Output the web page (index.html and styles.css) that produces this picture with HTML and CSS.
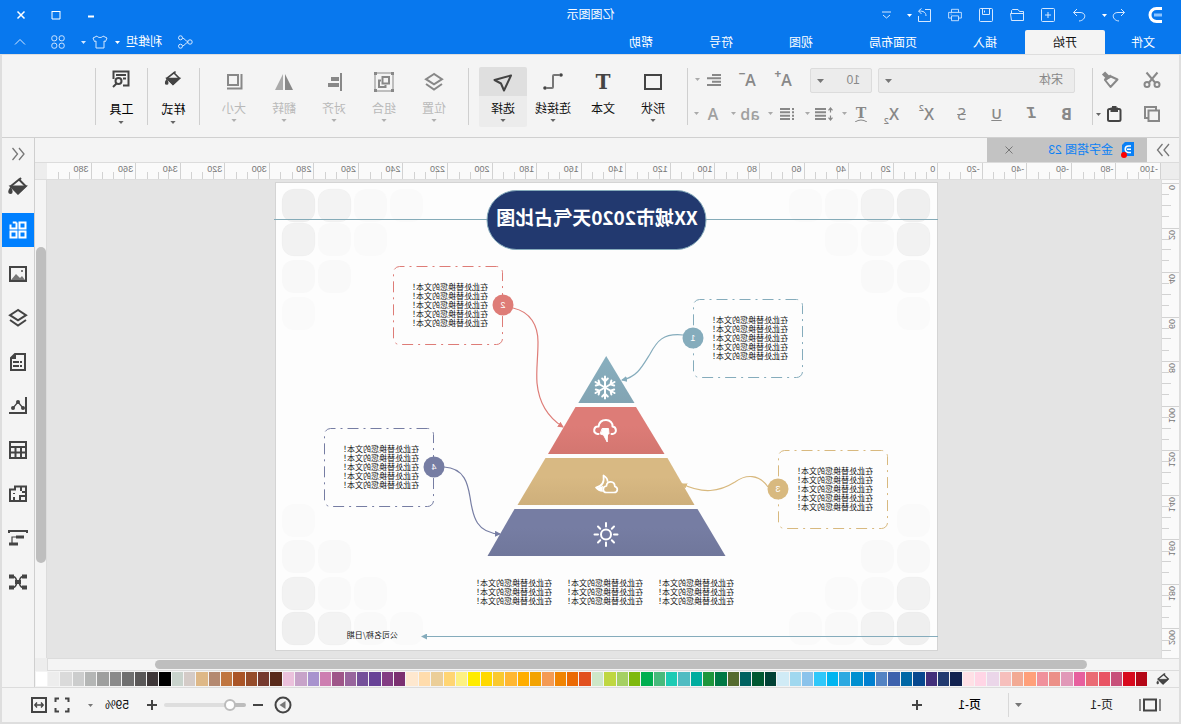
FILE: index.html
```html
<!DOCTYPE html>
<html lang="zh-CN">
<head>
<meta charset="utf-8">
<title>亿图图示</title>
<link rel="stylesheet" href="styles.css">
</head>
<body>
<svg class="defs" aria-hidden="true">
  <symbol id="i-caret" viewBox="0 0 7 4"><path d="M0 0h7L3.500 4z" fill="currentColor"/></symbol>
  <symbol id="i-bucket" viewBox="0 0 20 20"><path d="M7 2l2 2" stroke="currentColor" stroke-width="2"/><path d="M9 3.500L2.500 10 10 17l7-7z" fill="none" stroke="currentColor" stroke-width="2"/><path d="M2.500 10.500h14.500L10 17.500z" fill="currentColor"/><path d="M17.500 12.500c2 3 1.500 4.500 0 4.500s-1.500-2 0-4.500z" fill="currentColor"/></symbol>
  <symbol id="i-layers" viewBox="0 0 20 20"><path d="M10 2l8 5.200-8 5.200-8-5.200zM2 12l8 5.500 8-5.500" fill="none" stroke="currentColor" stroke-width="2"/></symbol>
</svg>
<div class="app">
  <header class="header">
    <div class="titlebar">
      <div class="quick">
        <svg class="logo" viewBox="0 0 16 18"><path d="M1 2.500h5.500a6.500 6.500 0 0 1 0 13H1" fill="none" stroke="#fff" stroke-width="3"/><path d="M1 9h8" stroke="#8cc4ff" stroke-width="3"/></svg>
        <button class="qbtn q-undo" aria-label="撤销"><svg viewBox="0 0 14 14"><path d="M5 1L1.500 4.500 5 8M1.500 4.500H8c7 0 6 8-1 8.500"/></svg></button>
        <svg class="caret"><use href="#i-caret"/></svg>
        <button class="qbtn q-redo" aria-label="重做"><svg viewBox="0 0 14 14"><path d="M9 1l3.500 3.500L9 8M12.500 4.500H6c-7 0-6 8 1 8.500"/></svg></button>
        <button class="qbtn" aria-label="新建"><svg viewBox="0 0 14 14"><rect x=".5" y=".5" width="13" height="13" rx="1"/><path d="M7 4v6M4 7h6"/></svg></button>
        <button class="qbtn" aria-label="打开"><svg viewBox="0 0 14 14"><path d="M.5 12.500v-9h4l1.500-2h5.500l1 1v3M.5 5.500h13l-1 7H.5"/></svg></button>
        <button class="qbtn" aria-label="保存"><svg viewBox="0 0 14 14"><rect x=".5" y=".5" width="13" height="13" rx="1"/><path d="M3.500.5v6h7v-6M8.500 2.500v2"/></svg></button>
        <button class="qbtn" aria-label="打印"><svg viewBox="0 0 16 14"><path d="M4 4V.5h8V4M4 10.500H.7V4h14.600v6.500H12M4 8h8v5.500H4zM12 6h1"/></svg></button>
        <button class="qbtn" aria-label="导出"><svg viewBox="0 0 14 14"><path d="M6 1.500H.5v12h12V8M5 8c0-4 3-5 7-5M9.500.5L12.500 3 9.500 6"/></svg></button>
        <svg class="caret near"><use href="#i-caret"/></svg>
        <button class="qbtn q-more" aria-label="自定义"><svg viewBox="0 0 9 9"><path d="M0 1h9M1 4l3.500 3L8 4"/></svg></button>
      </div>
      <div class="title">亿图图示</div>
      <div class="window">
        <button aria-label="最小化"><svg viewBox="0 0 10 10"><path d="M2 6.500h6" stroke-width="2"/></svg></button>
        <button aria-label="最大化"><svg viewBox="0 0 10 10"><path d="M1 1.500h8M1 1v8h8V1" stroke-width="1"/></svg></button>
        <button aria-label="关闭"><svg viewBox="0 0 10 10"><path d="M1.500 1.500l7 7M8.500 1.500l-7 7" stroke-width="1.500"/></svg></button>
      </div>
    </div>
    <nav class="menubar">
      <button class="menu first">文件</button>
      <button class="menu active">开始</button>
      <button class="menu">插入</button>
      <button class="menu">页面布局</button>
      <button class="menu">视图</button>
      <button class="menu">符号</button>
      <button class="menu">帮助</button>
      <div class="account">
        <button aria-label="分享"><svg width="16" height="14" viewBox="0 0 16 14"><circle cx="3" cy="7" r="2.200"/><circle cx="12.500" cy="2.800" r="2"/><circle cx="12.500" cy="11.200" r="2"/><path d="M5 6.500c3-.5 3-3 5.500-3.500M5 7.500c3 .5 3 3 5.500 3.500"/></svg></button>
        <button class="user">利维坦<svg class="caret"><use href="#i-caret"/></svg></button>
        <button class="skin" aria-label="皮肤"><svg width="16" height="14" viewBox="0 0 16 14"><path d="M5 1c1 2 5 2 6 0l4 2-1.500 3.500-1.500-.5v7H4V6l-1.500.5L1 3z"/></svg><svg class="caret"><use href="#i-caret"/></svg></button>
        <button class="apps" aria-label="应用"><svg width="14" height="14" viewBox="0 0 14 14"><rect x=".8" y=".8" width="5" height="5" rx="2"/><rect x="8.200" y=".8" width="5" height="5" rx="2"/><rect x=".8" y="8.200" width="5" height="5" rx="2"/><rect x="8.200" y="8.200" width="5" height="5" rx="2"/></svg></button>
        <button class="fold" aria-label="收起"><svg width="12" height="8" viewBox="0 0 12 8"><path d="M1 6.500l5-5 5 5"/></svg></button>
      </div>
    </nav>
  </header>

  <div class="frame">
    <section class="ribbon">
      <div class="clip">
        <button aria-label="剪切"><svg width="18" height="18" viewBox="0 0 18 18"><path d="M3.500 1.500L12 11.500M14.500 1.500L6 11.500" /><circle cx="4" cy="13.500" r="2.500"/><circle cx="14" cy="13.500" r="2.500"/></svg></button>
        <button aria-label="格式刷"><svg width="18" height="18" viewBox="0 0 18 18"><path d="M1.500 8.500L8 5.500l6 3.500-5.500 7z" stroke-linejoin="round"/><path d="M11 6.500l4.500-4.500" stroke-width="4.500"/><path d="M8 4.500l6.500 4.500" stroke-width="2.500"/></svg></button>
        <button aria-label="复制"><svg width="18" height="18" viewBox="0 0 18 18"><path d="M5 2h11v11"/><rect x="2" y="5.500" width="10.500" height="10.500"/><path d="M5 1v4M12 13h5"/></svg></button>
        <button class="dark" aria-label="粘贴"><svg width="18" height="18" viewBox="0 0 18 18"><rect x="2.500" y="4" width="12.500" height="12" rx="1.500"/><path d="M6 6V3.500h1.500V2h2.500v1.500h1.500V6z"/></svg><svg class="caret"><use href="#i-caret"/></svg></button>
      </div>
      <i class="sep"></i>
      <div class="fontgroup">
        <div class="frow top">
          <label class="combo wide"><select aria-label="字体"><option>宋体</option></select><svg class="caret"><use href="#i-caret"/></svg></label>
          <label class="combo small"><select aria-label="字号"><option>10</option></select><svg class="caret"><use href="#i-caret"/></svg></label>
          <button class="fbtn grow">A<sup>+</sup></button>
          <button class="fbtn grow">A<sup>−</sup></button>
          <button class="fbtn drop" aria-label="对齐方式"><svg width="14" height="12" viewBox="0 0 14 12"><path d="M0 1h9M0 4.300h14M0 7.700h9M0 11h14"/></svg><svg class="caret"><use href="#i-caret"/></svg></button>
        </div>
        <div class="frow">
          <button class="fbtn bold">B</button>
          <button class="fbtn italic">I</button>
          <button class="fbtn under">U</button>
          <button class="fbtn strike">S</button>
          <button class="fbtn script">X<sup>2</sup></button>
          <button class="fbtn script">X<sub>2</sub></button>
          <button class="fbtn drop stack" aria-label="文字方向"><span class="slab">T</span><svg class="arc" width="14" height="3" viewBox="0 0 14 3"><path d="M1 3Q7-1 13 3"/></svg><svg class="caret"><use href="#i-caret"/></svg></button>
          <button class="fbtn drop" aria-label="行距"><svg width="18" height="14" viewBox="0 0 18 14"><path d="M2.500 1v4.500M.5 3.300L2.500 1l2 2.300M2.500 8.500V13M.5 10.700l2 2.300 2-2.300" stroke-width="1.200"/><path d="M7 2h11M7 5.300h11M7 8.700h11M7 12h11"/></svg><svg class="caret"><use href="#i-caret"/></svg></button>
          <button class="fbtn drop" aria-label="项目符号"><svg width="14" height="14" viewBox="0 0 14 14"><path d="M0 2h2M0 5.300h2M0 8.700h2M0 12h2M4 2h10M4 5.300h10M4 8.700h10M4 12h10"/></svg><svg class="caret"><use href="#i-caret"/></svg></button>
          <button class="fbtn drop light"><span>ab</span><svg class="caret"><use href="#i-caret"/></svg></button>
          <button class="fbtn drop light"><span>A</span><svg class="caret"><use href="#i-caret"/></svg></button>
        </div>
      </div>
      <i class="sep"></i>
      <div class="tools">
        <button class="tool"><svg class="ico" viewBox="0 0 20 20"><rect x="2" y="3" width="16" height="14"/></svg><span>形状</span><svg class="caret"><use href="#i-caret"/></svg></button>
        <button class="tool"><b class="ico slab">T</b><span>文本</span></button>
        <button class="tool"><svg class="ico" viewBox="0 0 20 20"><circle cx="2" cy="3" r="1.800" fill="currentColor" stroke="none"/><circle cx="18" cy="16" r="1.800" fill="currentColor" stroke="none"/><path d="M3 3h6q1 0 1 1v11q0 1 1 1h6" stroke="#777"/></svg><span>连接线</span><svg class="caret"><use href="#i-caret"/></svg></button>
        <button class="tool selected"><svg class="ico" viewBox="0 0 20 20"><path d="M2 3.500L18.500 8 12 11.500 9 18.500z" stroke-linejoin="round"/></svg><span>选择</span><svg class="caret"><use href="#i-caret"/></svg></button>
      </div>
      <i class="sep"></i>
      <div class="tools off">
        <button class="tool" disabled><svg class="ico"><use href="#i-layers"/></svg><span>位置</span><svg class="caret"><use href="#i-caret"/></svg></button>
        <button class="tool" disabled><svg class="ico" viewBox="0 0 20 20"><rect x="1" y="1" width="18" height="18" stroke-width="1"/><path d="M0 0h3v3H0zM17 0h3v3h-3zM0 17h3v3H0zM17 17h3v3h-3z" fill="currentColor" stroke="none"/><rect x="5" y="5" width="6.500" height="6.500"/><path d="M13 8.500h2V15H8.500v-2"/></svg><span>组合</span><svg class="caret"><use href="#i-caret"/></svg></button>
        <button class="tool" disabled><svg class="ico" viewBox="0 0 20 20"><path d="M3 1v18"/><path d="M5 7h8M5 13h11" stroke-width="4"/></svg><span>对齐</span><svg class="caret"><use href="#i-caret"/></svg></button>
        <button class="tool" disabled><svg class="ico" viewBox="0 0 20 20"><path d="M9 2v16H1z" fill="#888" stroke="none"/><path d="M11 2v16h8z" fill="#aaa" stroke="none"/></svg><span>翻转</span><svg class="caret"><use href="#i-caret"/></svg></button>
        <button class="tool" disabled><svg class="ico" viewBox="0 0 20 20"><rect x="6" y="3" width="10" height="10"/><path d="M2.500 2v14.500H17"/></svg><span>大小</span><svg class="caret"><use href="#i-caret"/></svg></button>
      </div>
      <i class="sep"></i>
      <button class="tool tall"><svg class="ico" viewBox="-2 -1 24 24"><use href="#i-bucket" width="20" height="20"/></svg><span>样式</span><svg class="caret"><use href="#i-caret"/></svg></button>
      <i class="sep"></i>
      <button class="tool tall"><svg class="ico" viewBox="0 0 20 20"><path d="M8 16.500H2.500v-14h15V10M5 6h10M5 9.500h3"/><circle cx="12.500" cy="12" r="3"/><path d="M14.500 14.500l3.500 3.500"/></svg><span>工具</span><svg class="caret"><use href="#i-caret"/></svg></button>
      <i class="sep"></i>
    </section>

    <div class="body">
      <main class="editor">
        <div class="doctabs">
          <button class="more" aria-label="展开"><svg width="14" height="14" viewBox="0 0 14 14"><path d="M1 1l5 6-5 6M7.500 1l5 6-5 6"/></svg></button>
          <div class="doctab">
            <svg width="14" height="16" viewBox="0 0 14 16"><path d="M1 0h9l3 3v11H1z" fill="#0a80f5" stroke="none"/><path d="M4 4h2.500a3.200 3.200 0 0 1 0 6.500H4M4 7.200h4" fill="none" stroke="#fff" stroke-width="1.600"/><circle cx="11" cy="13" r="3" fill="#f00" stroke="none"/></svg>
            <a href="#doc">金字塔图 23</a>
            <button aria-label="关闭标签"><svg width="8" height="8" viewBox="0 0 8 8"><path d="M.5.5l7 7M7.500.5l-7 7"/></svg></button>
          </div>
        </div>
        <div class="rulerrow"><div class="corner"></div><div class="hruler" id="hruler"></div><div class="corner end"></div></div>
        <div class="stage">
          <div class="vruler"><div class="vscale" id="vruler"></div></div>
          <div class="canvas" id="doc">
            <svg class="page" viewBox="243 182 664 469">
              <defs>
                <linearGradient id="g1" x2="0" y2="1"><stop stop-color="#88afbf"/><stop offset="1" stop-color="#82a4b3"/></linearGradient>
                <linearGradient id="g2" x2="0" y2="1"><stop offset=".4" stop-color="#dd7c77"/><stop offset="1" stop-color="#d37670"/></linearGradient>
                <linearGradient id="g3" x2="0" y2="1"><stop offset=".4" stop-color="#d8b983"/><stop offset="1" stop-color="#ceaf7b"/></linearGradient>
                <linearGradient id="g4" x2="0" y2="1"><stop offset=".4" stop-color="#767da3"/><stop offset="1" stop-color="#70779b"/></linearGradient>
                <marker id="arrow" viewBox="0 0 6 6" refX="5" refY="3" markerWidth="6" markerHeight="6" markerUnits="userSpaceOnUse" orient="auto"><path d="M0 0l6 3-6 3z" fill="context-stroke"/></marker>
              </defs>
              <rect x="243.500" y="182.500" width="662" height="468" fill="#fdfdfd" stroke="#d4d4d4"/>
              <g id="tiles"></g>
              <path d="M243 219.500h664" stroke="#85abb8"/>
              <rect x="475" y="190.500" width="219" height="59" rx="29.500" fill="#22396f" stroke="#85abbb"/>
              <text class="heading" x="584" y="225">XX城市2020天气占比图</text>
              <path d="M574.800 356L602.700 403H546.500z" fill="url(#g1)"/>
              <path d="M545 407h60.500l27.500 47H516.500z" fill="url(#g2)"/>
              <path d="M513.500 458h122l28 47H486.500z" fill="url(#g3)"/>
              <path d="M483.500 509h183l27 47H455.500z" fill="url(#g4)"/>
              <g fill="none" stroke="#fff" stroke-width="2" stroke-linecap="round" stroke-linejoin="round">
                <g transform="translate(576 387.500)">
                  <g id="arm"><path d="M0 0v-11M-2.800-9L0-6.200l2.800-2.800"/></g>
                  <use href="#arm" transform="rotate(60)"/><use href="#arm" transform="rotate(120)"/><use href="#arm" transform="rotate(180)"/><use href="#arm" transform="rotate(240)"/><use href="#arm" transform="rotate(300)"/>
                </g>
                <g transform="translate(564 419)"><path d="M5.500 15H4.500c-5-1-4-7 0-7.500C4 4 7 1 11 1c5 0 7 3 7.500 6.500 5-.5 6 6.500 1 7.500h-1"/><path d="M14.500 9.500h-6l-.5 5.500 1.500 0 .3 8 3.700-7 3-1z" fill="#fff" stroke-width="1"/></g>
                <g transform="translate(563 474)"><path d="M4 18.500c-4 0-4.500-5-.8-6 0-6 8-6 8.300-.5 4.500.5 4 6.500 0 6.500z" stroke-width="1.700"/><path d="M10.500 7c0-2 1.500-4 4-5.500-1 7 2 11 7.500 12-2 2.500-4 3.300-6.500 3.500" stroke-width="1.700"/><path d="M15 11.500c2 1.500 4 2 7 2-2 2-4 3-6.500 3z" fill="#fff" stroke="none"/></g>
                <g transform="translate(575 534.500)"><circle r="5"/><path d="M0-8v-3.500M0 8v3.500M-8 0h-3.500M8 0h3.500M-5.800-5.800L-8-8M5.800-5.800L8-8M-5.800 5.800L-8 8M5.800 5.800L8 8"/></g>
              </g>
              <g fill="none" stroke-width="1.200">
                <path stroke="#85acbc" marker-end="url(#arrow)" d="M498 335C518 333 524 341 531 354C539 367 544 377 559 380"/>
                <path stroke="#de7c77" marker-end="url(#arrow)" d="M668 308C650 312 643 326 643 342C643 358 645 370 644 383C642 404 632 418 618 427"/>
                <path stroke="#d8b97f" marker-end="url(#arrow)" d="M413 487C422 474 435 474 446 482C462 492 478 494 499 484"/>
                <path stroke="#767da3" marker-end="url(#arrow)" d="M737 467C716 468 713 485 711 497C708 518 704 533 681 534"/>
                <path stroke="#85acbc" marker-end="url(#arrow)" d="M243 636.500H759"/>
              </g>
              <g id="callouts"></g>
              <text class="note" x="783" y="638">公司名称/日期</text>
            </svg>
          </div>
          <div class="vscroll"><i class="before"></i><i class="thumb"></i><i class="after"></i></div>
        </div>
        <div class="hscrollrow"><div class="hscroll"><i class="before"></i><i class="thumb"></i><i class="after"></i></div><div class="corner end"></div></div>
        <div class="palette"><button aria-label="填充"><svg width="14" height="14"><use href="#i-bucket"/></svg></button><div class="swatches" id="swatches"></div></div>
      </main>
      <aside class="side">
        <button class="chev" aria-label="折叠"><svg viewBox="0 0 14 14"><path d="M6 1L1 7l5 6M12.500 1l-5 6 5 6"/></svg></button>
        <button aria-label="填充"><svg><use href="#i-bucket"/></svg></button>
        <button class="on" aria-label="符号库"><svg viewBox="0 0 20 20"><rect x="2.500" y="2.500" width="6" height="6"/><path d="M11.500 2.500h4M17.500 4v4.500h-6v-6"/><rect x="2.500" y="11.500" width="6" height="6"/><rect x="11.500" y="11.500" width="6" height="6"/><path d="M16 1v3h3" stroke="#0080ff" stroke-width="1"/></svg></button>
        <button aria-label="图片"><svg viewBox="0 0 20 20"><rect x="2" y="3" width="16" height="14"/><path d="M3 16l3-4 2 2 4-4 5 6z" fill="#777" stroke="none"/><path d="M5 6h2v2H5z" fill="#777" stroke="none"/></svg></button>
        <button aria-label="图层"><svg><use href="#i-layers"/></svg></button>
        <button aria-label="文档"><svg viewBox="0 0 20 20"><path d="M3 2h10l4 4v12H3z"/><path d="M13 2v4h4" fill="currentColor"/><path d="M6 10h2M9 10h6M6 14h2M9 14h6"/></svg></button>
        <button aria-label="图表"><svg viewBox="0 0 20 20"><path d="M2 1v16h17"/><path d="M5 12l5-6 5 6" stroke-width="1.200"/><g fill="currentColor" stroke="none"><circle cx="5" cy="12" r="2"/><circle cx="10" cy="6" r="2"/><circle cx="15" cy="12" r="2"/></g></svg></button>
        <button aria-label="表格"><svg viewBox="0 0 20 20"><path d="M2 2h16v16H2zM2 7h16M2 12.500h16M7 7v11M12.500 7v11"/></svg></button>
        <button aria-label="平面图"><svg viewBox="0 0 20 20"><path d="M2 2.500h11v3h5V17H2zM7 3v4M2 8h4M2 12h6v5M14 17v-4M14 9v1"/></svg></button>
        <button aria-label="甘特图"><svg viewBox="0 0 20 20"><path d="M1 5V3h18v2" /><path d="M4 9h8M10 16h9" stroke-width="3"/><path d="M12 9h4v6" stroke-width="1.200"/></svg></button>
        <button aria-label="思维导图"><svg viewBox="0 0 20 20"><path d="M5 4.500c4 0 3 5.500 5 5.500s1-5.500 5-5.500M5 15.500c4 0 3-5.500 5-5.500s1 5.500 5 5.500" stroke-width="1.500"/><path d="M1 4.500h5M14 4.500h5M1 15.500h5M14 15.500h5M7 10h6" stroke-width="4"/></svg></button>
      </aside>
    </div>

    <footer class="status">
      <button class="pages" aria-label="页面视图"><svg width="22" height="14" viewBox="0 0 22 14"><rect x="5" y="1.500" width="12" height="11"/><path d="M1 1v12M21 1v12" stroke="#888"/></svg></button>
      <label class="pagepick"><select aria-label="页面"><option>页-1</option></select><svg class="caret"><use href="#i-caret"/></svg></label>
      <button class="current">页-1</button>
      <button aria-label="新增页面"><svg width="10" height="10" viewBox="0 0 10 10"><path d="M5 0v10M0 5h10"/></svg></button>
      <span class="space"></span>
      <button class="play" aria-label="演示"><svg width="18" height="18" viewBox="0 0 18 18"><circle cx="9" cy="9" r="7.500"/><path d="M6.500 5v8l6-4z" fill="#777" stroke="none"/></svg></button>
      <button aria-label="缩小"><svg width="10" height="10" viewBox="0 0 10 10"><path d="M0 5h10"/></svg></button>
      <input class="zoom" type="range" min="0" max="100" value="14" aria-label="缩放">
      <button aria-label="放大"><svg width="10" height="10" viewBox="0 0 10 10"><path d="M5 0v10M0 5h10"/></svg></button>
      <button class="percent">59%<svg class="caret"><use href="#i-caret"/></svg></button>
      <button class="full" aria-label="全屏"><svg width="16" height="16" viewBox="0 0 16 16"><path d="M1.500 5V1.500H5M11 1.500h3.500V5M14.500 11v3.500H11M5 14.500H1.500V11"/></svg></button>
      <button class="fit" aria-label="适应宽度"><svg width="16" height="16" viewBox="0 0 16 16"><rect x="1" y="1" width="14" height="14"/><path d="M4 8h8M6 5.500L3.800 8 6 10.500M10 5.500L12.200 8 10 10.500" stroke-width="1.400"/></svg></button>
    </footer>
  </div>
</div>
<script src="app.js"></script>
</body>
</html>
```

FILE: styles.css
```css
* { box-sizing: border-box; }
body {
  margin: 0;
  font: 12px/16px "Liberation Sans", "Noto Sans CJK SC", sans-serif;
  color: #111;
  background: #dedede;
}
/* Whole interface runs in mirrored orientation */
.app {
  display: flex;
  flex-direction: column;
  min-height: 100vh;
  transform: scaleX(-1);
}
.defs { position: absolute; width: 0; height: 0; }
button, select, input { font: inherit; color: inherit; margin: 0; }
button { background: none; border: 0; padding: 0; display: inline-flex; align-items: center; justify-content: center; }
svg { fill: none; stroke: currentColor; flex: none; }
.caret { width: 7px; height: 4px; stroke: none; }

/* Header */
.header { background: #0878ee; color: #fff; }
.titlebar { display: grid; grid-template-columns: 1fr auto 1fr; height: 30px; align-items: center; }
.quick { display: flex; align-items: center; padding-left: 18px; }
.logo { width: 16px; height: 18px; margin: 0 20px 0 0; }
.qbtn { width: 15px; height: 16px; margin-right: 16px; color: #d5e8ff; }
.qbtn svg { width: 14px; height: 14px; }
.q-undo { margin-right: 5px; }
.quick .caret { width: 5px; height: 3px; margin-right: 15px; }
.qbtn:nth-last-child(3) { margin-right: 5px; }
.quick .near { margin-right: 16px; }
.q-more { margin: 0; width: 9px; }
.q-more svg { width: 9px; height: 9px; }
.window { display: flex; justify-content: flex-end; gap: 23px; padding-right: 15px; }
.window button { width: 12px; height: 12px; }
.window svg { width: 10px; height: 10px; }
.menubar { display: flex; height: 24px; }
.menu { padding: 1px 28px 0; }
.menu.first { padding: 1px 26px 0; }
.menu.active { background: #f4f4f4; color: #111; border-radius: 2px 2px 0 0; }
.account { display: flex; align-items: center; margin-left: auto; padding: 0 14px 0 0; color: #d5e8ff; }
.account .caret { width: 5px; height: 3px; margin-left: 6px; }
.user { color: #fff; margin-left: 15px; }
.skin { margin-left: 7px; }
.apps { margin-left: 16px; }
.fold { margin-left: 25px; }

/* Framed area below the header */
.frame {
  flex: 1;
  display: flex;
  flex-direction: column;
  background: #f4f4f4;
  border: solid #dedede;
  border-width: 1px 2px 2px;
}
.ribbon { display: flex; height: 83px; border-bottom: 1px solid #d0d0d0; padding-top: 12px; color: #888; align-items: flex-start; }
.sep { width: 1px; height: 57px; margin-top: 1px; background: #cfcfcf; }
.clip { display: grid; grid-template-columns: 34px 52px; grid-auto-rows: 34px; width: 86px; }
.clip button { height: 26px; stroke-width: 2; }
.clip button:nth-child(odd) { padding-left: 20px; }
.clip button:nth-child(2) { justify-content: flex-start; padding-left: 26px; }
.clip .dark { justify-content: flex-start; padding-left: 22px; gap: 4px; color: #444; }
.clip .dark .caret { width: 5px; height: 3px; color: #666; }
.fontgroup { width: 404px; }
.frow { display: flex; padding-left: 8px; height: 34px; align-items: center; }
.frow.top { height: 30px; padding: 0 0 4px 17px; }
.combo { position: relative; display: flex; height: 25px; border: 1px solid #dcdcdc; border-radius: 2px; background: #ececec; }
.combo select { appearance: none; width: 100%; background: none; border: 0; padding: 0 11px; color: #888; }
.combo .caret { position: absolute; right: 6px; top: 10px; color: #777; }
.combo.wide { width: 197px; margin-right: 6px; }
.combo.small { width: 62px; margin-right: 9px; }
.fbtn { width: 35px; height: 22px; font: 600 16px/16px "Open Sans", sans-serif; stroke-width: 2; color: #888; }
.fbtn sup, .fbtn sub { font-size: 9px; line-height: 9px; align-self: flex-start; }
.fbtn sub { align-self: flex-end; }
.fbtn.grow { width: 36px; }
.fbtn.grow sup { font-size: 12px; font-weight: bold; }
.fbtn.bold { font-weight: bold; }
.fbtn.italic { font: italic bold 16px "Liberation Mono", monospace; }
.fbtn.under { text-decoration: underline; font-size: 14px; }
.fbtn.strike { text-decoration: line-through; font-weight: 400; }
.fbtn.drop { position: relative; width: 37px; padding-right: 11px; }
.fbtn.stack { flex-direction: column; }
.fbtn .caret { position: absolute; right: 5px; top: 9px; width: 5px; height: 3px; color: #aaa; }
.top .drop { margin-left: 2px; }
.fbtn.light { color: #a0a0a0; }
.slab { font-family: "DejaVu Serif", serif; font-weight: bold; }
.fbtn .slab { font-size: 14px; line-height: 12px; }
.arc { stroke-width: 1; }
.tools { display: flex; padding: 0 9px; color: #444; }
.tool { flex-direction: column; justify-content: flex-start; width: 50px; height: 60px; padding-top: 5px; color: #111; }
.tool .ico { width: 20px; height: 20px; stroke-width: 2; color: #444; }
.tool b.ico { font-size: 20px; line-height: 20px; text-align: center; }
.tool span { margin-top: 9px; }
.tool .caret { width: 6px; height: 3px; color: #666; margin-top: 2px; }
.selected { width: 48px; margin: 0 1px; background: linear-gradient(#dfdfdf 29px, #ececec 29px); border-radius: 2px; }
.off .ico { color: #888; }
.off .tool { color: #b9b9b9; }
.off .caret { color: #b0b0b0; }
.tall { width: 51px; padding-top: 2px; }
.tall span { margin-top: 13px; color: #000; }
.tall .caret { margin-top: 3px; }

/* Body */
.body { flex: 1; display: flex; border-bottom: 1px solid #dcdcdc; }
.editor { flex: 1; min-width: 0; display: flex; flex-direction: column; }
.doctabs { display: flex; height: 25px; border-bottom: 1px solid #dcdcdc; color: #777; }
.more { width: 32px; stroke-width: 1.300; }
.doctab { display: flex; align-items: center; width: 160px; padding: 0 18px 0 12px; background: #c3c3c3; }
.doctab a { flex: 1; margin-left: 8px; color: #0a80f5; text-decoration: none; }
.rulerrow { display: flex; height: 17px; border-bottom: 1px solid #dedede; }
.corner { width: 18px; background: #ededed; }
.corner.end { width: 12px; }
.hruler { flex: 1; display: grid; grid-template-columns: repeat(25, 1fr); background: #fafafa; overflow: hidden; }
.hruler span, .vscale span { font-size: 9px; line-height: 10px; color: #777; background-repeat: no-repeat; }
.hruler span {
  border-left: 1px solid #d2d2d2;
  padding: 1px 0 0 2px;
  background-image: linear-gradient(#d2d2d2, #d2d2d2), linear-gradient(#d2d2d2, #d2d2d2), linear-gradient(#d2d2d2, #d2d2d2);
  background-size: 1px 7px;
  background-position: 24% 100%, 49% 100%, 75% 100%;
}
.stage { flex: 1; display: flex; min-height: 0; }
.vruler { width: 18px; background: #fafafa; border-right: 1px solid #dcdcdc; padding-top: 3px; overflow: hidden; position: relative; }
.vscale { position: absolute; width: 17px; height: 490px; display: grid; grid-template-rows: repeat(11, 1fr); }
.vscale span {
  border-top: 1px solid #d2d2d2;
  background-image: linear-gradient(#d2d2d2, #d2d2d2), linear-gradient(#d2d2d2, #d2d2d2), linear-gradient(#d2d2d2, #d2d2d2);
  background-size: 7px 1px, 9px 1px, 7px 1px;
  background-position: 100% 24%, 100% 49%, 100% 75%;
  padding: 1px 0 0 2px;
}
.vscale b { font-weight: normal; display: block; width: 10px; writing-mode: vertical-rl; transform: rotate(180deg); }
.canvas { flex: 1; min-width: 0; background: #e4e4e4; padding: 2px 0 7px 223px; overflow: hidden; }
.page { display: block; width: 664px; stroke: none; overflow: visible; }
.heading { font: bold 19px "Noto Sans CJK SC", sans-serif; fill: #fff; text-anchor: middle; }
.note { font: 8px "Noto Sans CJK SC", sans-serif; fill: #111; }
.badge { font: 9px "Liberation Sans", sans-serif; fill: #fff; text-anchor: middle; }
.vscroll { width: 12px; border-left: 1px solid #dcdcdc; display: flex; flex-direction: column; padding: 0 1px 0 0; }
.thumb { background: #bebebe; border-radius: 5px; }
.vscroll .before { flex: 67; }
.vscroll .thumb { flex: 316; }
.vscroll .after { flex: 95; }
.hscrollrow { display: flex; height: 13px; }
.hscroll { flex: 1; display: flex; border: solid #dcdcdc; border-width: 1px 1px 1px 0; padding: 1px 0; }
.hscroll .before { flex: 92; }
.hscroll .thumb { flex: 932; }
.hscroll .after { flex: 107; }
.palette { display: flex; height: 16px; }
.palette button { width: 32px; color: #444; }
.swatches { flex: 1; display: flex; gap: 1px; padding: 1px 1px 1px 0; }
.swatches i { flex: 1; }

/* Tool strip */
.side { width: 33px; border-left: 1px solid #cfcfcf; display: flex; flex-direction: column; gap: 10px; color: #444; }
.side button { height: 34px; stroke-width: 2; }
.side svg { width: 20px; height: 20px; }
.side .chev { height: 31px; margin-bottom: -10px; color: #777; stroke-width: 1.300; }
.side .chev svg { width: 14px; height: 14px; }
.side .on { background: #0080ff; color: #fff; }

/* Status bar */
.status { display: flex; align-items: center; height: 34px; color: #444; stroke-width: 2; padding-right: 29px; }
.pages { margin-left: 18px; }
.pagepick { position: relative; width: 131px; height: 24px; border-right: 1px solid #d8d8d8; display: flex; }
.pagepick select { appearance: none; border: 0; background: none; width: 100%; padding: 0 26px; color: #222; }
.pagepick .caret { position: absolute; right: 6px; top: 10px; color: #777; }
.current { margin: 0 36px 0 27px; color: #000; font-weight: 500; }
.space { flex: 1; }
.play { margin-right: 11px; }
.zoom { appearance: none; width: 82px; height: 12px; margin: 0 7px; background: none; }
.zoom::-webkit-slider-runnable-track { height: 4px; border-radius: 2px; background: linear-gradient(90deg, #bcbcbc 16px, #dedede 16px); }
.zoom::-webkit-slider-thumb { appearance: none; width: 12px; height: 12px; margin-top: -4px; border: 2px solid #bcbcbc; border-radius: 50%; background: #fff; }
.percent { margin-left: 18px; gap: 12px; color: #111; }
.percent .caret { width: 5px; height: 3px; color: #777; }
.full { margin-left: 18px; }
.fit { margin-left: 7px; }
```

FILE: app.js
```js
const SVG = "http://www.w3.org/2000/svg";

function shape(parent, name, attrs, text) {
  const el = document.createElementNS(SVG, name);
  for (const key in attrs) el.setAttribute(key, attrs[key]);
  if (text) el.textContent = text;
  parent.append(el);
}

// Rulers
const hruler = document.getElementById("hruler");
for (let n = -100; n <= 380; n += 20) {
  const cell = document.createElement("span");
  cell.textContent = n;
  hruler.append(cell);
}
const vruler = document.getElementById("vruler");
for (let n = 0; n <= 200; n += 20) {
  const cell = document.createElement("span");
  const label = document.createElement("b");
  label.textContent = n;
  cell.append(label);
  vruler.append(cell);
}

// Palette
const colors = `b40616 d8091d c8507a e95464 ea6b74 e7609e e198b8 ec9088 f0919c ffa07a
f2aa94 f6bfbc ebd6e9 ffd5e5 ffe0e6 122250 223a70 432f7a 07488f 0068a6
3e62ad 5383c3 0080d0 0090d0 2ca9e1 00b5f0 30c8fa 8bc3eb a0d8ef d0ebf6
004135 005831 006260 556b2f 007945 1e963c 00ad9f 50bcc2 1dcbb4 48ba7c
00af50 7eb90d a5d063 bfd741 cee7c8 e2501f eb6903 f08403 f49b54 f3a302
ffae00 ffb732 fac92f ffd900 ffec00 fdf182 ffd573 ebce98 ffdcac fee8cf
7b2f70 833c83 684297 75509a 98659d 9f5689 cd7eb1 a893ce c7a3c9 ebc1dc
58291a 763a2f 954c2a aa5527 c07640 b48970 deb887 d4cbc7 c9d3cc 000000
3e3738 5a5858 707070 8a8a8a 9e9f9e b4b6b5 cccdcd dadada ededed ffffff`.split(/\s+/);
const swatches = document.getElementById("swatches");
for (const color of colors) {
  const cell = document.createElement("i");
  cell.style.background = "#" + color;
  swatches.append(cell);
}

// Corner tiles, mirrored to all four corners of the page
const tiles = document.getElementById("tiles");
const rows = [["#efefef", "#f3f3f3", "#f9f9f9", "#fafafa"], ["#f2f2f2", "#f9f9f9", "#fafafa"], ["#f8f8f8", "#f9f9f9"], ["#fafafa"]];
const topY = [189, 223, 260, 297];
const bottomY = [612, 577, 540, 504];
rows.forEach((row, r) => row.forEach((fill, c) => {
  for (const x of [251 + c * 36, 866 - c * 36]) {
    for (const y of [topY[r], bottomY[r]]) {
      shape(tiles, "rect", { x, y, width: 33, height: 33, rx: 12, fill, stroke: "#000", "stroke-opacity": r + c < 2 ? 0.015 : 0 });
    }
  }
}));

// Callouts and notes
const layer = document.getElementById("callouts");
const phrase = "在此处替换您的文本！";
function note(x, y, count) {
  for (let i = 0; i < count; i++) shape(layer, "text", { class: "note", x, y: y + i * 9 }, phrase);
}
[
  { x: 378, y: 299, side: 110, color: "#85acbc" },
  { x: 678, y: 266, side: 0, color: "#de7c77" },
  { x: 293, y: 450, side: 110, color: "#d8b97f" },
  { x: 747, y: 428, side: 0, color: "#767da3" }
].forEach((c, i) => {
  shape(layer, "rect", { x: c.x + 0.5, y: c.y + 0.5, width: 109, height: 78, rx: 6, fill: "none", stroke: c.color, "stroke-dasharray": "11 5 2 5" });
  shape(layer, "circle", { cx: c.x + c.side, cy: c.y + 39, r: 10.5, fill: c.color });
  shape(layer, "text", { class: "badge", x: c.x + c.side, y: c.y + 42 }, String(i + 1));
  note(c.x + 15, c.y + 24, 5);
});
[447, 538, 629].forEach(x => note(x, 586, 3));
```
